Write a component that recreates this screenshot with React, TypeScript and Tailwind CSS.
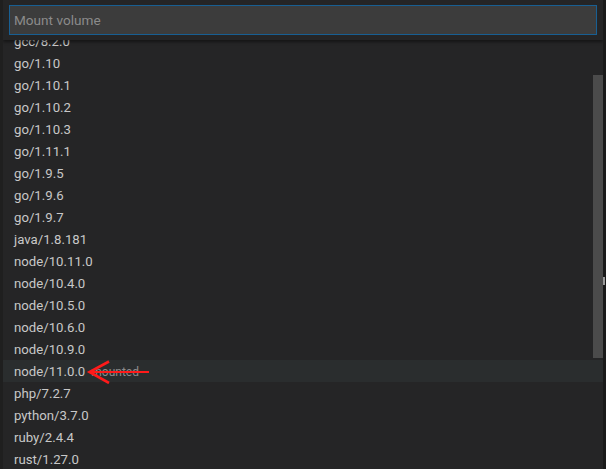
import React from "react";

const items = [
  "gcc/8.2.0",
  "go/1.10",
  "go/1.10.1",
  "go/1.10.2",
  "go/1.10.3",
  "go/1.11.1",
  "go/1.9.5",
  "go/1.9.6",
  "go/1.9.7",
  "java/1.8.181",
  "node/10.11.0",
  "node/10.4.0",
  "node/10.5.0",
  "node/10.6.0",
  "node/10.9.0",
  "node/11.0.0",
  "php/7.2.7",
  "python/3.7.0",
  "ruby/2.4.4",
  "rust/1.27.0",
];

export default function App() {
  return (
    <div
      className="flex w-[606px] h-[469px] overflow-hidden bg-[#1e1e1e]"
      style={{ fontFamily: "Roboto, 'Liberation Sans', sans-serif" }}
    >
      <div className="w-[3px] shrink-0 bg-[#1f1f1f]" />
      <div className="relative flex-1 overflow-hidden bg-[#252526]">
        <ul className="flex flex-col pt-[30px]">
          {items.map((it) => {
            const active = it === "node/11.0.0";
            return (
              <li
                key={it}
                className={`relative flex items-center h-[22px] pl-[11px] pt-[1px] text-[13.2px] text-[#c8c8c8] ${
                  active ? "bg-[#2a2d2e]" : ""
                }`}
              >
                <span>{it}</span>
                {active && (
                  <>
                    <span className="ml-[6px] text-[12px] text-[#8c8c8c]">mounted</span>
                    <svg
                      className="absolute left-[82px] top-0"
                      width="70"
                      height="24"
                      viewBox="0 0 70 24"
                    >
                      <line x1="6" y1="12" x2="64" y2="12" stroke="#ff1a1a" strokeWidth="2" />
                      <polyline
                        points="24,1.5 4.5,12 24,23"
                        fill="none"
                        stroke="#ff1a1a"
                        strokeWidth="2.6"
                        strokeLinejoin="miter"
                      />
                    </svg>
                  </>
                )}
              </li>
            );
          })}
        </ul>
        <div className="absolute right-0 top-[75px] w-[10px] h-[283px] bg-[#4b4b4b]" />
        <div className="absolute left-0 right-0 top-0 h-[40px] bg-[#252526] pl-[6px] pr-[6px] pt-[5px] shadow-[0_2px_3px_rgba(0,0,0,0.45)]">
          <div className="flex items-center h-[30px] border border-[#185f93] bg-[#3c3c3c] pl-[4px]">
            <span className="text-[13.6px] text-[#8b8b8b]">Mount volume</span>
          </div>
        </div>
      </div>
      <div className="flex w-[3px] shrink-0 flex-col bg-[#1a1a1a]">
        <div className="h-[277px]" />
        <div className="h-[8px] w-[2px] bg-[#9a9a9a]" />
      </div>
    </div>
  );
}
